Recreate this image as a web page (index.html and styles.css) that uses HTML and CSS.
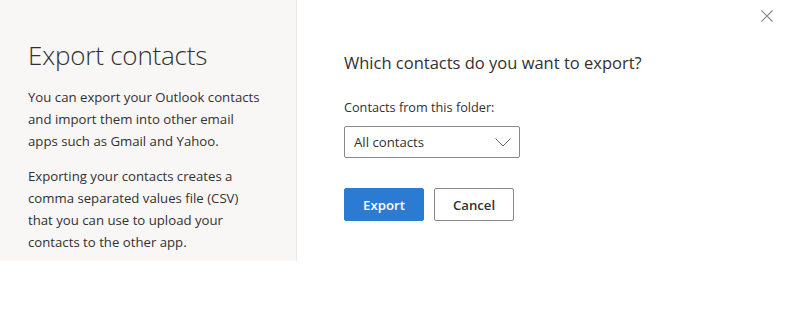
FILE: index.html
```html
<!DOCTYPE html>
<html>
<head>
<meta charset="utf-8">
<link rel="stylesheet" href="styles.css">
</head>
<body>
<div class="dialog">
  <aside class="info">
    <h1 class="title">Export contacts</h1>
    <p class="para">You can export your Outlook contacts and import them into other email apps such as Gmail and Yahoo.</p>
    <p class="para">Exporting your contacts creates a comma separated values file (CSV) that you can use to upload your contacts to the other app.</p>
  </aside>
  <main class="content">
    <h2 class="question">Which contacts do you want to export?</h2>
    <label class="label">Contacts from this folder:</label>
    <div class="select">
      <span>All contacts</span>
      <svg class="chev" width="16" height="9" viewBox="0 0 16 9"><path d="M0.5 0.5 L8 8 L15.5 0.5" fill="none" stroke="#666" stroke-width="1"/></svg>
    </div>
    <div class="actions">
      <button class="btn primary">Export</button>
      <button class="btn">Cancel</button>
    </div>
  </main>
  <button class="close" aria-label="Close">
    <svg width="12" height="12" viewBox="0 0 12 12"><path d="M0.5 0.5 L11.5 11.5 M11.5 0.5 L0.5 11.5" stroke="#8a8a8a" stroke-width="1.2"/></svg>
  </button>
</div>
</body>
</html>
```
FILE: styles.css
```css
html, body {
  margin: 0;
  background: #fff;
}
body {
  font-family: "Open Sans", "Noto Sans", sans-serif;
  color: #323130;
}
.dialog {
  position: relative;
  display: flex;
  align-items: flex-start;
  width: 792px;
  height: 313px;
}
.info {
  box-sizing: border-box;
  width: 297px;
  height: 261px;
  background: #f8f7f6;
  border-right: 1px solid #ebe9e7;
  padding: 37px 0 0 28px;
}
.title {
  margin: 0 0 13px;
  font-size: 26px;
  font-weight: 300;
  line-height: 36px;
  color: #323130;
  letter-spacing: -0.2px;
}
.para {
  width: 233px;
  margin: 0 0 13px;
  font-size: 13.2px;
  line-height: 22px;
  color: #323130;
}
.content {
  padding: 52px 0 0 47px;
}
.question {
  margin: 0 0 23px;
  font-size: 16.5px;
  font-weight: 400;
  line-height: 22px;
  color: #323130;
}
.label {
  display: block;
  font-size: 12.7px;
  line-height: 20px;
  margin-bottom: 9px;
}
.select {
  box-sizing: border-box;
  width: 176px;
  height: 32px;
  border: 1px solid #8a8886;
  border-radius: 2px;
  display: flex;
  align-items: center;
  justify-content: space-between;
  padding: 0 8px 0 9px;
  font-size: 13.2px;
}
.chev {
  display: block;
}
.actions {
  display: flex;
  gap: 10px;
  margin-top: 30px;
}
.btn {
  box-sizing: border-box;
  width: 80px;
  height: 33px;
  border: 1px solid #8a8886;
  border-radius: 2px;
  background: #fff;
  font-family: "Open Sans", "Noto Sans", sans-serif;
  font-size: 13.2px;
  font-weight: 600;
  color: #323130;
  padding: 0;
}
.btn.primary {
  background: #2b7bd3;
  border-color: #2b7bd3;
  color: #fff;
}
.close {
  position: absolute;
  top: 10px;
  right: 19px;
  border: 0;
  background: none;
  padding: 0;
  width: 12px;
  height: 12px;
}
.close svg { display: block; }
```
